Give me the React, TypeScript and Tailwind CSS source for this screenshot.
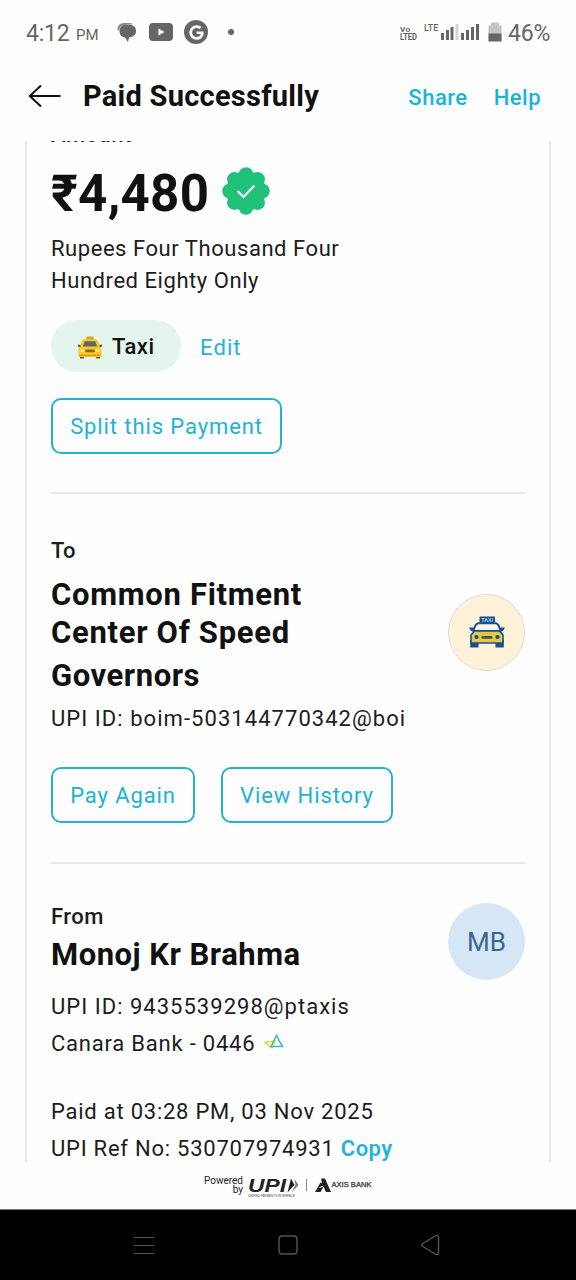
import type { ReactNode } from "react";
import { FaGoogle } from "react-icons/fa";

function StatusBar() {
  return (
    <div className="flex h-[64px] shrink-0 items-center pl-[26px] pr-[26px] text-[#666]">
      <span className="w-[50px] pt-[4px] text-[23px] tracking-[-0.2px]">4:12</span>
      <span className="mt-[6px] w-[41px] text-[15px]">PM</span>
      <svg className="h-[20px] w-[20px]" viewBox="0 0 20 20">
        <path d="M0.500 8.500C0 3 3 1 7.500 1H14l1.500 1.500-8 .5C4 3.500 2.500 5.500 2 8.500Z" fill="#8c8c8c" />
        <path d="M8 3h5c4 0 6 2.500 6 6 0 4-3 6-7 6.500L11 20l-3-4.500C4.500 15 2.500 12.500 2.500 9S5 3 8 3Z" fill="#666" />
      </svg>
      <svg className="ml-[12px] h-[18px] w-[24px]" viewBox="0 0 24 18">
        <rect width="24" height="18" rx="4" fill="#666" />
        <path d="M9.500 5.500v7l6-3.500Z" fill="#fff" />
      </svg>
      <span className="ml-[11px] flex h-[24px] w-[24px] items-center justify-center rounded-full bg-[#666]">
        <FaGoogle className="h-[15px] w-[15px] text-white" />
      </span>
      <span className="ml-[20px] h-[6px] w-[6px] rounded-full bg-[#666]" />
      <svg className="ml-auto h-[18px] w-[20px]" viewBox="0 0 20 18" fill="#555" fontFamily="Roboto" fontWeight="600">
        <text x="0" y="8.500" fontSize="8" textLength="10">Vo</text>
        <text x="0" y="16.500" fontSize="9" textLength="17" lengthAdjust="spacingAndGlyphs">LTED</text>
      </svg>
      <span className="mb-[7px] ml-[4px] w-[17px] text-[9px] leading-[9px] font-medium">LTE</span>
      <svg className="h-[18px] w-[39px]" viewBox="0 0 39 18">
        <g fill="#666">
          <rect x="0" y="10" width="3" height="7" />
          <rect x="5" y="7" width="3" height="10" />
          <rect x="9.500" y="4" width="3" height="13" />
          <rect x="20" y="10" width="3" height="7" />
          <rect x="25" y="7" width="3" height="10" />
          <rect x="30" y="4" width="3" height="13" />
          <rect x="35" y="1" width="3" height="16" />
        </g>
        <rect x="14.500" y="1" width="3" height="16" fill="#d5d5d5" />
      </svg>
      <svg className="ml-[8px] h-[20px] w-[14px]" viewBox="0 0 14 20">
        <path d="M0.500 19V3.500H3V1.500Q3 .5 4 .5h6q1 0 1 1v2h2.500V19Z" fill="#c4c4c4" />
        <path d="M0.500 11.500h13v8H.5Z" fill="#666" />
      </svg>
      <span className="ml-[6px] w-[42px] pt-[4px] text-[23px] tracking-[-0.2px] whitespace-nowrap">46%</span>
    </div>
  );
}

function Header() {
  return (
    <div className="flex h-[77px] shrink-0 items-start pt-[14px] pr-[35px] pl-[28px]">
      <svg className="mt-[5px] h-[26px] w-[34px]" viewBox="0 0 34 26" fill="none" stroke="#111" strokeWidth="2">
        <path d="M32.500 13H2M13 2.500 1.800 13 13 23.500" />
      </svg>
      <h1 className="ml-[21px] text-[29px] leading-[36px] font-bold tracking-[0.26px] whitespace-nowrap text-[#111]">
        Paid Successfully
      </h1>
      <div className="ml-auto flex gap-[26px] pt-[2px] text-[22px] leading-[36px] font-medium tracking-[0.5px] text-[#18b4dc]">
        <span>Share</span>
        <span>Help</span>
      </div>
    </div>
  );
}

function VerifiedBadge() {
  const petals = [0, 45, 90, 135, 180, 225, 270, 315];
  return (
    <svg className="mb-[2px] h-[48px] w-[48px]" viewBox="-24 -24 48 48">
      <g fill="#21c179">
        <circle r="20" />
        {petals.map((a) => (
          <circle key={a} cx="0" cy="-16.500" r="7.300" transform={`rotate(${a})`} />
        ))}
      </g>
      <path d="M-8.500 0-2.500 6 8.500-5.500" fill="none" stroke="#fff" strokeWidth="2.200" />
    </svg>
  );
}

function TaxiEmoji() {
  return (
    <svg className="mt-[3px] h-[23px] w-[26px]" viewBox="0 0 26 24">
      <rect x="9" y="0.500" width="8" height="4" rx="1.500" fill="#d9a51c" />
      <path d="M2.500 20h4v3.500h-4ZM19.500 20h4v3.500h-4Z" fill="#6b5335" />
      <path d="M6.500 3.500h13Q22 5 23.500 11l1.500 3V22H1v-8l1.500-3Q4 5 6.500 3.500Z" fill="#fbc81e" />
      <path d="M7.500 5.500h11l2 5.500h-15Z" fill="#5d6672" />
      <path d="M0 9h3v2.500H1ZM23 9h3l-1 2.500h-2Z" fill="#54533f" />
      <rect x="3" y="14" width="4" height="2.500" rx="1" fill="#fff0a0" />
      <rect x="19" y="14" width="4" height="2.500" rx="1" fill="#fff0a0" />
      <rect x="8" y="14" width="10" height="3" rx="1" fill="#8b6b27" />
      <path d="M2 19.500h22V21H2Z" fill="#d89b18" />
    </svg>
  );
}

function TaxiAvatar() {
  return (
    <div className="flex h-[77px] w-[77px] items-center justify-center rounded-full border border-[#dcdcdc] bg-[#fff2d9]">
      <svg className="h-[34px] w-[36px]" viewBox="0 0 36 34">
        <path d="M4.500 15Q6 8 9 7.200h18Q30 8 31.500 15Z" fill="#fff8ea" stroke="#17528f" strokeWidth="2" />
        <rect x="10.500" y="0.500" width="15.500" height="6.500" rx="0.800" fill="#17528f" />
        <text x="18.200" y="5.800" fontSize="5.500" fontWeight="700" textAnchor="middle" fill="#a9c8e4" fontFamily="Roboto">TAXI</text>
        <path d="M0 11.500h4l2 3.500H2ZM36 11.500h-4l-2 3.500h4Z" fill="#17528f" />
        <path d="M1.200 24h8.300v7.500H1.200ZM26.500 24h8.300v7.500h-8.300Z" fill="#17528f" />
        <path d="M5.500 15h25l3.500 4v8H2v-8Z" fill="#e6c748" stroke="#17528f" strokeWidth="1.600" />
        <circle cx="7.500" cy="21" r="2.100" fill="#184e78" />
        <circle cx="28.500" cy="21" r="2.100" fill="#184e78" />
        <rect x="12.500" y="20" width="11" height="2.800" rx="1" fill="#425a45" />
      </svg>
    </div>
  );
}

function OutlineButton({ children, width }: { children: ReactNode; width: string }) {
  return (
    <button
      className={`${width} flex h-[56px] items-center justify-center rounded-[10px] border-2 border-[#25b2d0] pt-[2px] text-[22px] leading-[32px] tracking-[0.9px] whitespace-nowrap text-[#20b2d6]`}
    >
      {children}
    </button>
  );
}

function Receipt() {
  return (
    <div className="mx-[25px] h-[1021px] shrink-0 overflow-hidden border-x-2 border-[#e8e8e8] px-[24px] text-[22px] text-[#1c1c1c]">
      <div className="-mt-[22px] h-[32px] leading-[32px] font-medium tracking-[0.5px]">Amount</div>
      <div className="mt-[15px] flex h-[52px] items-center">
        <span className="w-[171px] pt-[3px] text-[51px] leading-[52px] font-bold tracking-[0.3px] whitespace-nowrap text-[#111]">
          ₹4,480
        </span>
        <VerifiedBadge />
      </div>
      <p className="mt-[15px] leading-[32px] tracking-[0.55px]">
        Rupees Four Thousand Four
        <br />
        Hundred Eighty Only
      </p>
      <div className="mt-[23px] flex h-[52px] items-center">
        <span className="flex h-[52px] w-[130px] items-center rounded-full bg-[#e3f5ec] pl-[26px]">
          <TaxiEmoji />
          <span className="ml-[9px] font-medium tracking-[0.5px] text-[#111]">Taxi</span>
        </span>
        <span className="ml-[19px] pt-[2px] tracking-[1.1px] text-[#20b2d6]">Edit</span>
      </div>
      <div className="mt-[26px]">
        <OutlineButton width="w-[231px]">Split this Payment</OutlineButton>
      </div>
      <div className="mt-[38px] h-[2px] bg-[#e8e8e8]" />

      <div className="mt-[41px] h-[32px] leading-[32px] font-medium">To</div>
      <div className="mt-[9px] flex h-[120px] justify-between">
        <h2 className="text-[31px] leading-[38px] font-bold tracking-[0.7px] whitespace-nowrap text-[#111]">
          Common Fitment
          <br />
          Center Of Speed
          <br />
          <span className="block leading-[48px] tracking-[0.55px]">Governors</span>
        </h2>
        <div className="pt-[18px]">
          <TaxiAvatar />
        </div>
      </div>
      <p className="mt-[7px] leading-[32px] tracking-[1.05px]">UPI ID: boim-503144770342@boi</p>
      <div className="mt-[32px] flex gap-[26px]">
        <OutlineButton width="w-[144px]">Pay Again</OutlineButton>
        <OutlineButton width="w-[172px]">View History</OutlineButton>
      </div>
      <div className="mt-[39px] h-[2px] bg-[#e8e8e8]" />

      <div className="mt-[35px] flex h-[84px] justify-between">
        <div>
          <div className="leading-[36px] font-medium tracking-[0.5px]">From</div>
          <h2 className="text-[31px] leading-[40px] font-bold tracking-[0.5px] whitespace-nowrap text-[#111]">Monoj Kr Brahma</h2>
        </div>
        <div className="mt-[4px] flex h-[77px] w-[77px] items-center justify-center rounded-full bg-[#d5e6f7] pt-[2px] text-[26px] text-[#3c6590]">
          MB
        </div>
      </div>
      <p className="mt-[6px] leading-[36px] tracking-[1.02px]">UPI ID: 9435539298@ptaxis</p>
      <div className="flex h-[36px] items-center">
        <span className="tracking-[0.78px]">Canara Bank - 0446</span>
        <svg className="mb-[2px] ml-[9px] h-[16px] w-[20px]" viewBox="0 0 20 16" fill="none" strokeWidth="1.600">
          <path d="m1 8.500 7 5.500 3-7Z" stroke="#dedb48" />
          <path d="m7 12.500 5.500-11 6 11Z" stroke="#46b7d5" />
        </svg>
      </div>
      <p className="mt-[32px] leading-[37px] tracking-[0.76px]">
        Paid at 03:28 PM, 03 Nov 2025
        <br />
        UPI Ref No: 530707974931 <span className="font-semibold tracking-[0.5px] text-[#23b4dc]">Copy</span>
      </p>
    </div>
  );
}

function PoweredBy() {
  return (
    <div className="flex h-[47px] shrink-0 items-start justify-center pt-[14px] text-[#222]">
      <div className="w-[39px] text-right text-[10px] leading-[9px]">
        Powered
        <br />
        by
      </div>
      <svg className="ml-[4px] h-[24px] w-[53px]" viewBox="0 0 53 24">
        <text x="1" y="16" fontSize="19" fontWeight="700" fontStyle="italic" fontFamily="Liberation Sans" textLength="38" lengthAdjust="spacingAndGlyphs" fill="#222">UPI</text>
        <path d="m44 2.500 3.500 6.500-7 7.500Z" fill="#222" />
        <path d="m47.500 3 4 6-7 7.500 4-7.500Z" fill="#777" />
        <text x="1" y="20.500" fontSize="3.200" fontFamily="Liberation Sans" textLength="47" lengthAdjust="spacingAndGlyphs" fill="#444">UNIFIED PAYMENTS INTERFACE</text>
      </svg>
      <div className="mt-[3px] ml-[6px] h-[12px] w-px bg-[#888]" />
      <svg className="mt-[2px] ml-[8px] h-[15px] w-[16px]" viewBox="0 0 16 15" fill="#222">
        <path d="M6 .5h4L16 14h-5L8.500 9 5.500 14H0L5.500 4.500 7 5Z" />
        <path d="m4.500 9.500 3-1 1.500 2" stroke="#fefefe" strokeWidth="1" fill="none" />
      </svg>
      <svg className="mt-[4px] h-[10px] w-[41px]" viewBox="0 0 41 10">
        <text x="0.500" y="6.500" fontSize="6.500" fontFamily="Liberation Sans" textLength="40" lengthAdjust="spacingAndGlyphs" stroke="#333" strokeWidth="0.250" fill="#333">AXIS BANK</text>
      </svg>
    </div>
  );
}

function NavBar() {
  return (
    <div className="h-[71px] shrink-0 border-t border-[#777] bg-black pt-[24px]">
      <div className="flex h-[22px] items-center text-[#555]">
        <svg className="ml-[134px] h-[20px] w-[20px]" viewBox="0 0 20 20" stroke="currentColor" strokeWidth="1.200">
          <path d="M0 2.500h20M0 10.500h20M0 18.500h20" />
        </svg>
        <svg className="ml-[124px] h-[20px] w-[20px]" viewBox="0 0 20 20" fill="none" stroke="currentColor" strokeWidth="1.400">
          <rect x="1" y="1" width="18" height="18" rx="3" />
        </svg>
        <svg className="ml-[122px] h-[22px] w-[20px]" viewBox="0 0 20 22" fill="none" stroke="currentColor" strokeWidth="1.400" strokeLinejoin="round">
          <path d="M16 1.500 2 10q-1 1 0 2l14 8.500q2.500.5 2.500-2V3.500q0-2.500-2.500-2Z" />
        </svg>
      </div>
    </div>
  );
}

export default function App() {
  return (
    <div className="flex h-[1280px] w-[576px] flex-col overflow-hidden bg-[#fefefe] font-['Roboto',sans-serif]">
      <StatusBar />
      <Header />
      <Receipt />
      <PoweredBy />
      <NavBar />
    </div>
  );
}
